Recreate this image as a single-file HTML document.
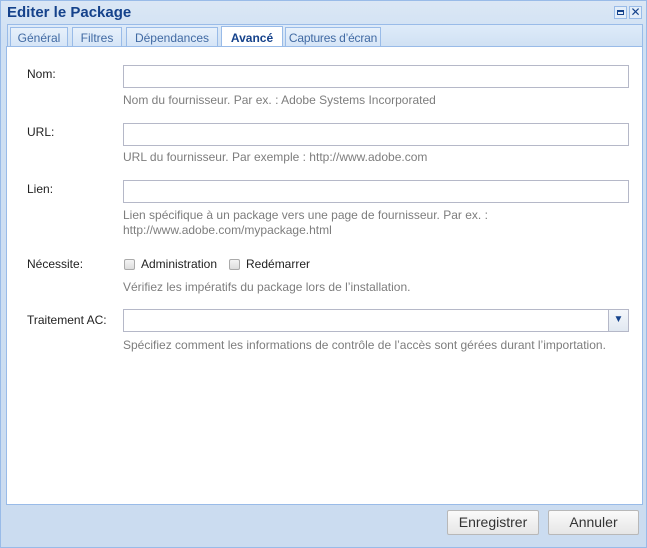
<!DOCTYPE html>
<html><head><meta charset="utf-8"><style>
*{box-sizing:border-box;margin:0;padding:0}
body{width:647px;height:548px;background:#cddff2;font-family:"Liberation Sans",sans-serif;font-size:12px;color:#333;position:relative;overflow:hidden}
.win{position:absolute;left:0;top:0;width:647px;height:548px;border:1px solid #99bbe8;background:linear-gradient(#dbe7f5,#cfe0f3 40px,#cbdcf0)}
.title{position:absolute;left:6px;top:3px;font-size:15px;font-weight:bold;color:#15428b}
.tb{position:absolute;top:5px;width:13px;height:13px;border:1px solid #99bbe8;background:#e4eef9}
.tabs{position:absolute;left:6px;top:23px;width:636px;height:24px;background:linear-gradient(#deebf9,#cfe0f3);border:1px solid #99bbe8;border-bottom:none}
.tab{position:absolute;top:2px;height:22px;border:1px solid #99bbe8;border-bottom:none;background:linear-gradient(#e8f1fb,#d3e3f6);color:#416aa3;padding-top:3px;text-align:center;white-space:nowrap;font-size:12px}
.tab.on{background:#fff;color:#15428b;font-weight:bold;height:23px}
.body{position:absolute;left:6px;top:46px;width:637px;height:459px;background:#fff;border:1px solid #99bbe8}
.lbl{position:absolute;left:27px;color:#222}
.in{position:absolute;left:123px;width:506px;height:23px;border:1px solid #b5b8c8;background:#fff}
.help{position:absolute;left:123px;color:#7d7d7d;line-height:15px}
.cb{position:absolute;width:11px;height:11px;border:1px solid #aaa;background:linear-gradient(#f4f4f4,#ddd);border-radius:2px}
.btn{position:absolute;top:510px;height:25px;border:1px solid #b8b8b8;border-radius:2px;background:linear-gradient(#fafafa,#e6e6e6);font-size:14px;color:#333;text-align:center;line-height:23px}
</style></head><body>
<div class="win">
<div class="title">Editer le Package</div>
<div class="tb" style="left:613px"><div style="position:absolute;left:2px;top:3px;width:7px;height:5px;border:1px solid #15428b;border-top-width:2px"></div></div>
<div class="tb" style="left:628px;color:#15428b;font-size:12px;line-height:11px;text-align:center">✕</div>
<div class="tabs">
<div class="tab" style="left:2px;width:58px">Général</div>
<div class="tab" style="left:64px;width:50px">Filtres</div>
<div class="tab" style="left:118px;width:92px">Dépendances</div>
<div class="tab on" style="left:213px;width:62px;top:1px;padding-top:4px">Avancé</div>
<div class="tab" style="left:277px;width:96px;letter-spacing:-0.2px">Captures d’écran</div>
</div>
</div>
<div class="body"></div>
<div class="lbl" style="top:67px">Nom:</div>
<div class="in" style="top:65px"></div>
<div class="help" style="top:93px">Nom du fournisseur. Par ex. : Adobe Systems Incorporated</div>
<div class="lbl" style="top:125px">URL:</div>
<div class="in" style="top:123px"></div>
<div class="help" style="top:150px">URL du fournisseur. Par exemple : http://www.adobe.com</div>
<div class="lbl" style="top:182px">Lien:</div>
<div class="in" style="top:180px"></div>
<div class="help" style="top:208px">Lien spécifique à un package vers une page de fournisseur. Par ex. :<br>http://www.adobe.com/mypackage.html</div>
<div class="lbl" style="top:257px">Nécessite:</div>
<div class="cb" style="left:124px;top:259px"></div>
<div style="position:absolute;left:141px;top:257px;color:#222">Administration</div>
<div class="cb" style="left:229px;top:259px"></div>
<div style="position:absolute;left:246px;top:257px;color:#222">Redémarrer</div>
<div class="help" style="top:280px">Vérifiez les impératifs du package lors de l’installation.</div>
<div class="lbl" style="top:313px">Traitement AC:</div>
<div class="in" style="top:309px"></div>
<div style="position:absolute;left:608px;top:310px;width:20px;height:21px;border-left:1px solid #b5b8c8;background:linear-gradient(#f4f7fb,#e1e8f1);color:#15428b;font-size:10px;text-align:center;line-height:20px">▼</div>
<div class="help" style="top:338px">Spécifiez comment les informations de contrôle de l’accès sont gérées durant l’importation.</div>
<div class="btn" style="left:447px;width:92px">Enregistrer</div>
<div class="btn" style="left:548px;width:91px">Annuler</div>
</body></html>
